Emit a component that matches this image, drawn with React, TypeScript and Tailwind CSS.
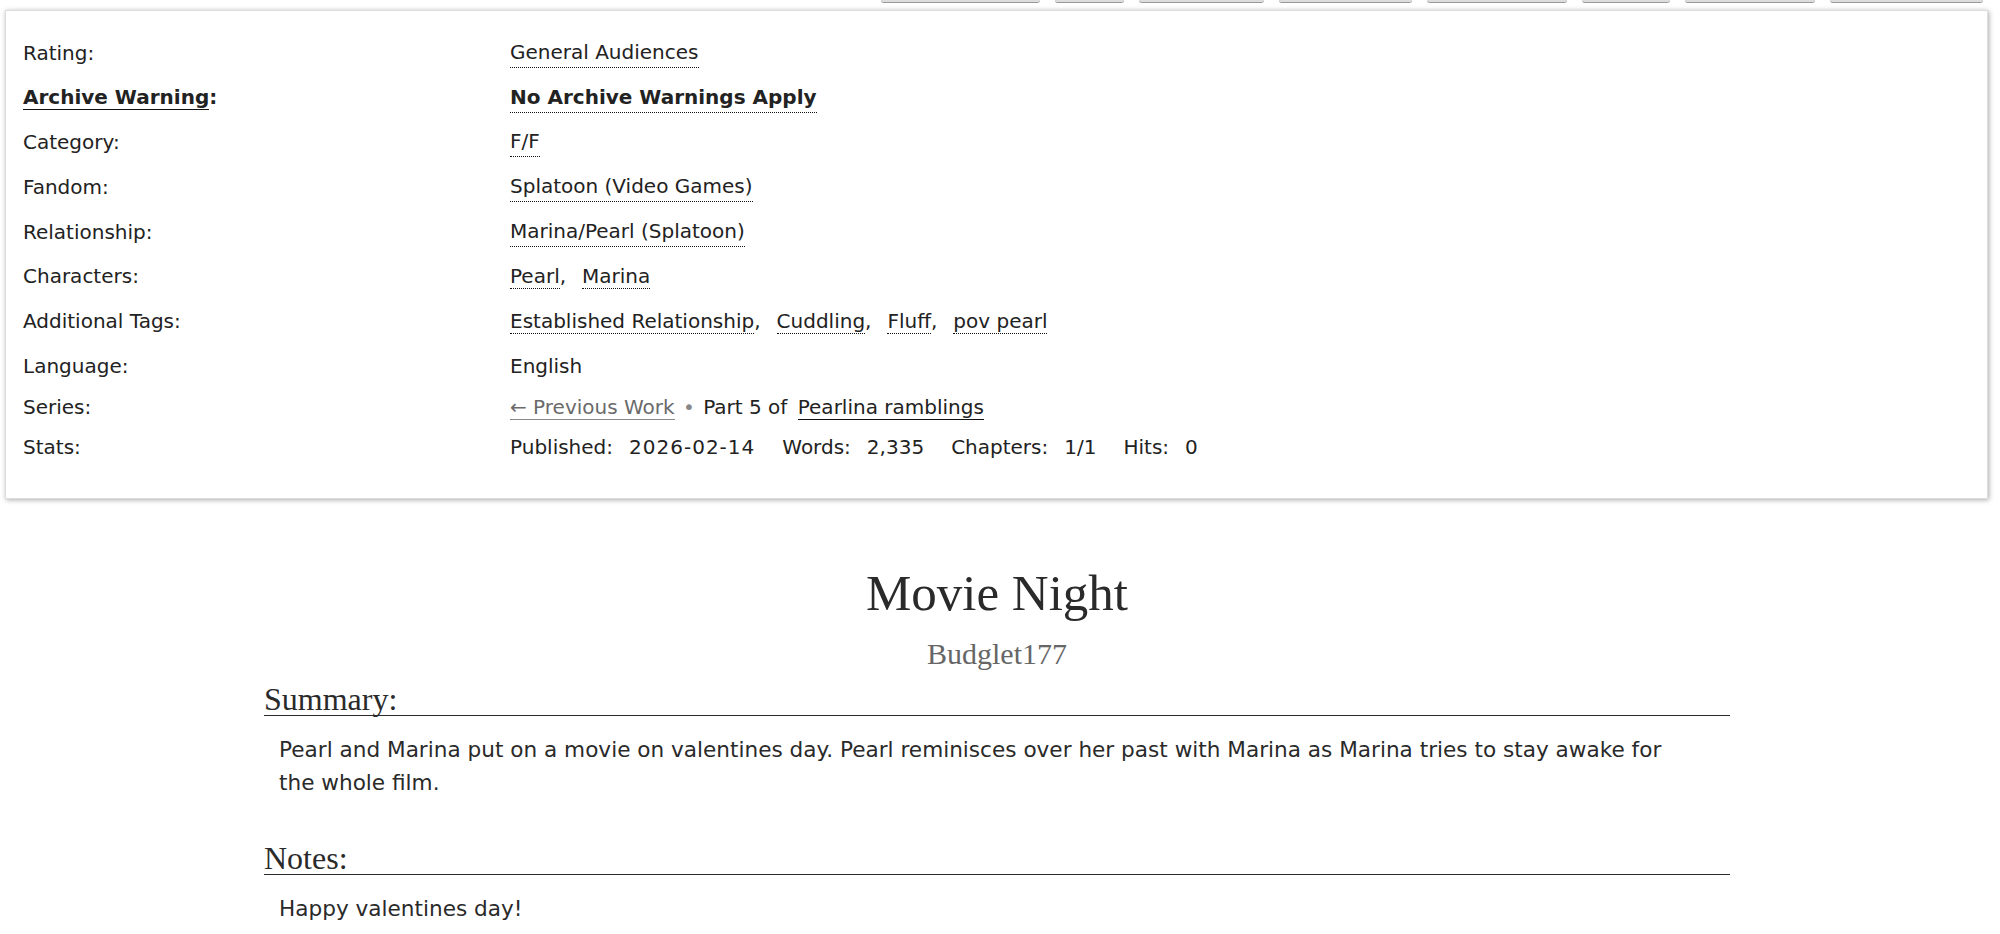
const topButtons = [159, 69, 125, 133, 140, 88, 130, 153];

type Row = {
  label: string;
  height: string;
  content: React.ReactNode;
  strong?: boolean;
};

function Tag({ children, bold }: { children: React.ReactNode; bold?: boolean }) {
  return (
    <a
      className={
        bold
          ? "font-bold border-b border-dotted border-[#111] cursor-pointer"
          : "border-b border-dotted border-[#111] cursor-pointer"
      }
    >
      {children}
    </a>
  );
}

function TagList({ tags }: { tags: string[] }) {
  return (
    <ul className="flex flex-wrap gap-x-[16px]">
      {tags.map((t, i) => (
        <li key={t}>
          <Tag>{t}</Tag>
          {i < tags.length - 1 && ","}
        </li>
      ))}
    </ul>
  );
}

function Stat({ label, value, wide }: { label: string; value: string; wide?: boolean }) {
  return (
    <span className="mr-[27px]">
      <span className="mr-[16px]">{label}:</span>
      <span className={wide ? "tracking-[1px]" : ""}>{value}</span>
    </span>
  );
}

const rows: Row[] = [
  { label: "Rating", height: "h-[45px]", content: <Tag>General Audiences</Tag> },
  {
    label: "Archive Warning",
    height: "h-[44px]",
    strong: true,
    content: <Tag bold>No Archive Warnings Apply</Tag>,
  },
  { label: "Category", height: "h-[45px]", content: <Tag>F/F</Tag> },
  { label: "Fandom", height: "h-[45px]", content: <Tag>Splatoon (Video Games)</Tag> },
  { label: "Relationship", height: "h-[45px]", content: <Tag>Marina/Pearl (Splatoon)</Tag> },
  { label: "Characters", height: "h-[44px]", content: <TagList tags={["Pearl", "Marina"]} /> },
  {
    label: "Additional Tags",
    height: "h-[45px]",
    content: <TagList tags={["Established Relationship", "Cuddling", "Fluff", "pov pearl"]} />,
  },
  { label: "Language", height: "h-[45px]", content: <span>English</span> },
  {
    label: "Series",
    height: "h-[37px]",
    content: (
      <span>
        <a className="text-[#6a6a6a] border-b border-[#888] cursor-pointer">← Previous Work</a>{" "}
        <span className="text-[#888] mx-[2px]">•</span> Part 5 of{" "}
        <a className="ml-[4px] border-b-[1.5px] border-[#111] cursor-pointer">Pearlina ramblings</a>
      </span>
    ),
  },
  {
    label: "Stats",
    height: "h-[43px]",
    content: (
      <span>
        <Stat label="Published" value="2026-02-14" wide />
        <Stat label="Words" value="2,335" />
        <Stat label="Chapters" value="1/1" />
        <Stat label="Hits" value="0" />
      </span>
    ),
  },
];

export default function App() {
  return (
    <div className="min-h-screen bg-white text-[#222] font-['DejaVu_Sans',sans-serif] text-[20px]">
      {/* bottoms of the chapter action buttons above the fold */}
      <div className="h-[3px] overflow-hidden flex justify-end gap-[15px] pr-[17px]">
        {topButtons.map((w, i) => (
          <div
            key={i}
            style={{ width: w }}
            className="h-[3px] shrink-0 bg-[#ddd] border-b border-[#999] rounded-b-[3px]"
          />
        ))}
      </div>

      <dl className="mt-[7px] ml-[5px] w-[1983px] border border-[#ddd] shadow-[1px_1px_5px_#aaa] bg-white pl-[17px] pt-[19px] pb-[30px] grid grid-cols-[487px_1fr]">
        {rows.map((r) => (
          <div key={r.label} className="contents">
            <dt className={`${r.height} flex items-center`}>
              {r.strong ? (
                <span className="font-bold">
                  <a className="border-b-[1.5px] border-[#111] cursor-pointer">{r.label}</a>:
                </span>
              ) : (
                <span>{r.label}:</span>
              )}
            </dt>
            <dd className={`${r.height} flex items-center`}>{r.content}</dd>
          </div>
        ))}
      </dl>

      <div className="ml-[264px] w-[1466px] text-[#2a2a2a]">
        <h2 className="mt-[69px] text-center font-['Liberation_Serif',serif] text-[51px] leading-none font-normal">
          Movie Night
        </h2>
        <h3 className="mt-[20px] text-center font-['Liberation_Serif',serif] text-[30px] leading-none text-[#666]">
          <a className="cursor-pointer">Budglet177</a>
        </h3>

        <div className="mt-[14px]">
          <h3 className="font-['Liberation_Serif',serif] text-[32px] leading-none border-b border-[#2a2a2a]">
            Summary:
          </h3>
          <blockquote className="mt-[17px] pl-[15px] pr-[30px] text-[21.6px] leading-[33px]">
            Pearl and Marina put on a movie on valentines day. Pearl reminisces over her past with
            Marina as Marina tries to stay awake for the whole film.
          </blockquote>
        </div>

        <div className="mt-[43px]">
          <h3 className="font-['Liberation_Serif',serif] text-[32px] leading-none border-b border-[#2a2a2a]">
            Notes:
          </h3>
          <blockquote className="mt-[17px] pl-[15px] text-[21.6px] leading-[33px]">
            Happy valentines day!
          </blockquote>
        </div>
      </div>
    </div>
  );
}
